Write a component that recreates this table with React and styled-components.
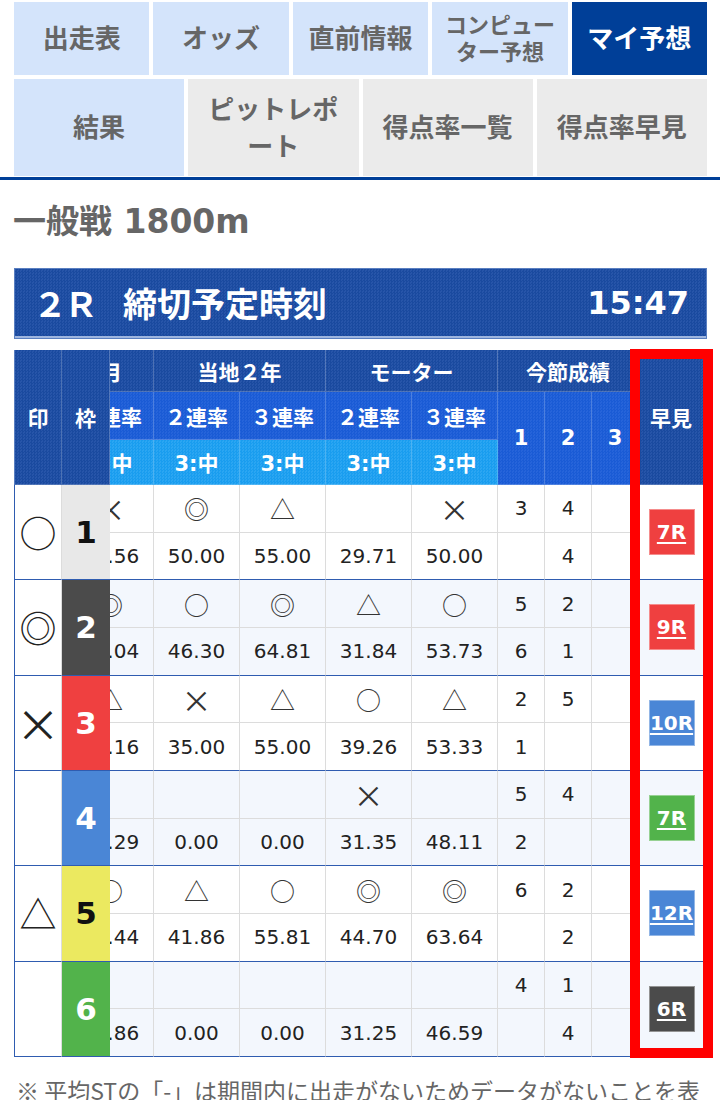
import React from 'react'
import styled, { createGlobalStyle, css } from 'styled-components'

const GlobalStyle = createGlobalStyle`
  *, *::before, *::after { box-sizing: border-box; }
  body {
    margin: 0;
    background: #fff;
    font-family: "DejaVu Sans", "Noto Sans CJK JP", sans-serif;
  }
`

const tones = {
  dark: ['#1a4a9f', '#2755a9'],
  mid: ['#1a5bd5', '#2664da'],
  light: ['#199def', '#2ba6f2']
}

const texture = tone => css`
  background-color: ${tones[tone][0]};
  background-image: repeating-conic-gradient(${tones[tone][0]} 0 25%, ${tones[tone][1]} 0 50%);
  background-size: 3px 3px;
`

const colors = {
  white: '#e8e8e8',
  black: '#4b4b4b',
  red: '#ef4040',
  blue: '#4a86d6',
  yellow: '#ebe960',
  green: '#52b34b'
}

const wakuColor = [null, colors.white, colors.black, colors.red, colors.blue, colors.yellow, colors.green]
const HORSE_LINE = '#2f5cb0'
const GRID_LINE = '#dcdcdc'

const Nav = styled.nav`
  display: flex;
  flex-direction: column;
  gap: 4px;
  padding: 2px 13px 1px 14px;
  border-bottom: 3px solid #003f98;
`

const TabRow = styled.div`
  display: grid;
  grid-template-columns: repeat(${p => p.$cols}, 1fr);
  gap: 4px;
  height: ${p => p.$height}px;
`

const tabBg = { light: '#d4e4fb', gray: '#ebebeb', active: '#003f98' }

const Tab = styled.a`
  display: flex;
  align-items: center;
  justify-content: center;
  padding: 0 6px 4px;
  text-align: center;
  font-family: "Noto Sans CJK JP", sans-serif;
  font-weight: 700;
  font-size: ${p => (p.$small ? 22 : 26)}px;
  line-height: ${p => (p.$small ? 27 : 37)}px;
  color: ${p => (p.$kind === 'active' ? '#fff' : '#666')};
  background: ${p => tabBg[p.$kind]};
`

const Title = styled.h2`
  margin: 19px 0 0;
  padding: 0 13px;
  font-size: 33px;
  line-height: 46px;
  font-weight: 700;
  color: #666;
`

const RaceBar = styled.div`
  display: flex;
  align-items: center;
  height: 71px;
  margin: 23px 13px 0 14px;
  padding: 0 17px 2px 18px;
  ${texture('dark')}
  border: 1px solid #5a7fc0;
  box-shadow: inset 0 -2px 0 #9fb6df;
  color: #fff;
  font-weight: 700;
  font-size: 32px;
`

const RaceNo = styled.span`
  font-family: "Noto Sans CJK JP", sans-serif;
  font-size: 34px;
  letter-spacing: -3px;
  margin-right: 28px;
`

const RaceLabel = styled.span`
  flex: 1;
  font-family: "Noto Sans CJK JP", sans-serif;
  font-size: 34px;
`

const TableWrap = styled.div`
  position: relative;
  display: flex;
  margin: 11px 16px 0 14px;
`

const Block = styled.div`
  display: grid;
  grid-template-columns: ${p => p.$cols};
  grid-template-rows: ${p => p.$rows};
  flex: 0 0 auto;
`

const Viewport = styled.div`
  flex: 0 0 529px;
  overflow: hidden;
`

const Scroller = styled(Block)`
  margin-left: -42px;
`

const Head = styled.div`
  display: flex;
  align-items: center;
  justify-content: center;
  white-space: nowrap;
  grid-column: span ${p => p.$span || 1};
  grid-row: span ${p => p.$rows || 1};
  ${p => texture(p.$tone || 'dark')}
  border-right: 1px solid rgba(255, 255, 255, 0.22);
  border-bottom: 1px solid rgba(255, 255, 255, 0.22);
  color: #fff;
  font-weight: 700;
  font-size: 21px;
`

/* group header whose left half has scrolled out of view */
const ScrolledHead = styled(Head)`
  justify-content: flex-end;
  padding-right: 31px;
`

const HeadLeft = styled(Head)`
  border-left: 1px solid #5a7fc0;
`

const Cell = styled.div`
  display: flex;
  align-items: center;
  justify-content: center;
  white-space: nowrap;
  background: ${p => p.$bg || (p.$alt ? '#f3f7fd' : '#fff')};
  border-right: 1px solid ${GRID_LINE};
  border-bottom: 1px solid ${p => (p.$last ? HORSE_LINE : GRID_LINE)};
  font-size: 20px;
  color: #222;
`

const MarkCell = styled(Cell)`
  font-family: "Noto Sans CJK JP", sans-serif;
  font-size: ${p => (p.$mark === '×' ? 30 : 25)}px;
  color: #333;
`

const BigMark = styled(Cell)`
  background: #fff;
  border-left: 1px solid ${HORSE_LINE};
  font-family: "Noto Sans CJK JP", sans-serif;
  font-size: ${p => (p.$mark === '×' ? 44 : 37)}px;
  color: #222;
`

const Waku = styled(Cell)`
  border-right: none;
  font-size: 31px;
  font-weight: 700;
  color: ${p => (p.$dark ? '#111' : '#fff')};
`

const EarlyCell = styled(Cell)`
  border-right: none;
`

const EarlyLink = styled.a`
  display: flex;
  align-items: center;
  justify-content: center;
  width: 46px;
  height: 46px;
  background: ${p => p.$color};
  border: 1px solid rgba(255, 255, 255, 0.4);
  color: #fff;
  font-weight: 700;
  font-size: 20px;
  text-decoration: underline;
  text-underline-offset: 3px;
  text-decoration-thickness: 2px;
`

const Highlight = styled.div`
  position: absolute;
  left: 616px;
  top: -1px;
  width: 83px;
  height: 709px;
  border: 10px solid #ff0000;
  pointer-events: none;
`

const Note = styled.p`
  margin: 16px 0 0;
  padding: 0 14px 0 16px;
  font-family: "Noto Sans CJK JP", sans-serif;
  font-size: 23px;
  line-height: 1.5;
  color: #666;
`

const horses = [
  {
    mark: '○', waku: 1,
    marks: ['×', '◎', '△', '', '×'],
    nums: ['41.56', '50.00', '55.00', '29.71', '50.00'],
    kon: [['3', '4', ''], ['', '4', '']],
    early: { label: '7R', color: colors.red }
  },
  {
    mark: '◎', waku: 2,
    marks: ['◎', '○', '◎', '△', '○'],
    nums: ['57.04', '46.30', '64.81', '31.84', '53.73'],
    kon: [['5', '2', ''], ['6', '1', '']],
    early: { label: '9R', color: colors.red }
  },
  {
    mark: '×', waku: 3,
    marks: ['△', '×', '△', '○', '△'],
    nums: ['48.16', '35.00', '55.00', '39.26', '53.33'],
    kon: [['2', '5', ''], ['1', '', '']],
    early: { label: '10R', color: colors.blue }
  },
  {
    mark: '', waku: 4,
    marks: ['', '', '', '×', ''],
    nums: ['14.29', '0.00', '0.00', '31.35', '48.11'],
    kon: [['5', '4', ''], ['2', '', '']],
    early: { label: '7R', color: colors.green }
  },
  {
    mark: '△', waku: 5,
    marks: ['○', '△', '○', '◎', '◎'],
    nums: ['53.44', '41.86', '55.81', '44.70', '63.64'],
    kon: [['6', '2', ''], ['', '2', '']],
    early: { label: '12R', color: colors.blue }
  },
  {
    mark: '', waku: 6,
    marks: ['', '', '', '', ''],
    nums: ['22.86', '0.00', '0.00', '31.25', '46.59'],
    kon: [['4', '1', ''], ['', '4', '']],
    early: { label: '6R', color: colors.black }
  }
]

const ROWS_SPLIT = '42px 48px 45px repeat(12, 47.667px)'
const ROWS_WHOLE = '135px repeat(6, 95.333px)'

export default function App() {
  return (
    <>
      <GlobalStyle />
      <Nav>
        <TabRow $cols={5} $height={73}>
          <Tab $kind="light">出走表</Tab>
          <Tab $kind="light">オッズ</Tab>
          <Tab $kind="light">直前情報</Tab>
          <Tab $kind="light" $small>
            コンピュー
            <br />
            ター予想
          </Tab>
          <Tab $kind="active">マイ予想</Tab>
        </TabRow>
        <TabRow $cols={4} $height={97}>
          <Tab $kind="light">結果</Tab>
          <Tab $kind="gray">
            ピットレポ
            <br />
            ート
          </Tab>
          <Tab $kind="gray">得点率一覧</Tab>
          <Tab $kind="gray">得点率早見</Tab>
        </TabRow>
      </Nav>

      <Title>一般戦 1800m</Title>

      <RaceBar>
        <RaceNo>２Ｒ</RaceNo>
        <RaceLabel>締切予定時刻</RaceLabel>
        <span>15:47</span>
      </RaceBar>

      <TableWrap>
        <Block $cols="48px 48px" $rows={ROWS_WHOLE}>
          <HeadLeft>印</HeadLeft>
          <Head>枠</Head>
          {horses.map(h => (
            <React.Fragment key={h.waku}>
              <BigMark $last $mark={h.mark}>{h.mark}</BigMark>
              <Waku $last $bg={wakuColor[h.waku]} $dark={h.waku === 1 || h.waku === 5}>
                {h.waku}
              </Waku>
            </React.Fragment>
          ))}
        </Block>

        <Viewport>
          <Scroller $cols="repeat(5, 86px) repeat(3, 47px)" $rows={ROWS_SPLIT}>
            <ScrolledHead>全国６ヶ月</ScrolledHead>
            <Head $span={2}>当地２年</Head>
            <Head $span={2}>モーター</Head>
            <Head $span={3}>今節成績</Head>
            {['３連率', '２連率', '３連率', '２連率', '３連率'].map((t, i) => (
              <Head key={i} $tone="mid">{t}</Head>
            ))}
            {['1', '2', '3'].map(n => (
              <Head key={n} $tone="mid" $rows={2}>{n}</Head>
            ))}
            {[0, 1, 2, 3, 4].map(i => (
              <Head key={i} $tone="light">3:中</Head>
            ))}
            {horses.map((h, i) => {
              const alt = i % 2 === 1
              return (
                <React.Fragment key={h.waku}>
                  {h.marks.map((m, j) => (
                    <MarkCell key={'m' + j} $alt={alt} $mark={m}>{m}</MarkCell>
                  ))}
                  {h.kon[0].map((v, j) => (
                    <Cell key={'k' + j} $alt={alt}>{v}</Cell>
                  ))}
                  {h.nums.map((v, j) => (
                    <Cell key={'n' + j} $alt={alt} $last>{v}</Cell>
                  ))}
                  {h.kon[1].map((v, j) => (
                    <Cell key={'l' + j} $alt={alt} $last>{v}</Cell>
                  ))}
                </React.Fragment>
              )
            })}
          </Scroller>
        </Viewport>

        <Block $cols="65px" $rows={ROWS_WHOLE}>
          <Head>早見</Head>
          {horses.map((h, i) => (
            <EarlyCell key={h.waku} $alt={i % 2 === 1} $last>
              <EarlyLink $color={h.early.color}>{h.early.label}</EarlyLink>
            </EarlyCell>
          ))}
        </Block>

        <Highlight />
      </TableWrap>

      <Note>※ 平均STの「-」は期間内に出走がないためデータがないことを表しています。</Note>
    </>
  )
}
